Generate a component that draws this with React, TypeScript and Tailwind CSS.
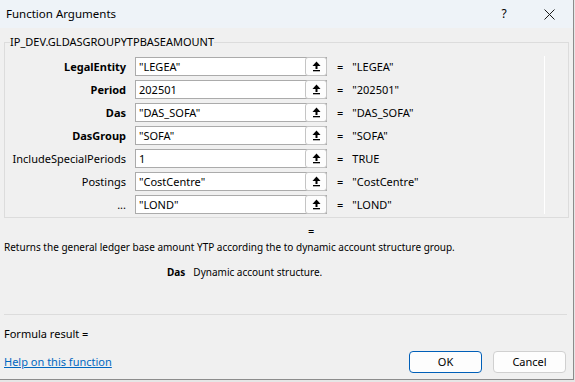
import React from "react";

type Row = { label: string; bold: boolean; input: string; value: string };

const rows: Row[] = [
  { label: "LegalEntity", bold: true, input: '"LEGEA"', value: '"LEGEA"' },
  { label: "Period", bold: true, input: "202501", value: '"202501"' },
  { label: "Das", bold: true, input: '"DAS_SOFA"', value: '"DAS_SOFA"' },
  { label: "DasGroup", bold: true, input: '"SOFA"', value: '"SOFA"' },
  { label: "IncludeSpecialPeriods", bold: false, input: "1", value: "TRUE" },
  { label: "Postings", bold: false, input: '"CostCentre"', value: '"CostCentre"' },
  { label: "...", bold: false, input: '"LOND"', value: '"LOND"' },
];

function UpArrow() {
  return (
    <svg width="9" height="11" viewBox="0 0 9 11">
      <polygon points="4.5,0.5 0.5,5 8.5,5" fill="#000" />
      <rect x="3.5" y="4.5" width="2" height="3.5" fill="#000" />
      <rect x="1" y="9" width="7" height="1.3" fill="#000" />
    </svg>
  );
}

export default function App() {
  return (
    <div className="w-[575px] h-[382px] bg-[#e6e6e6] font-['Noto_Sans',sans-serif] text-[11px] leading-[16px] text-black">
      <div className="w-[574px] h-[380px] bg-[#f0f0f0] border-r border-b border-[#8c8c8c] flex flex-col">
        {/* Title bar */}
        <div className="h-[28px] bg-[#eef3f8] flex items-center shrink-0">
          <span className="pl-[6px] text-[11.5px]">Function Arguments</span>
          <span className="ml-auto w-[12px] text-center text-[12px] mr-[34px]">?</span>
          <svg width="11" height="11" viewBox="0 0 11 11" className="mr-[18px]">
            <path d="M0.5 0.5 L10.5 10.5 M10.5 0.5 L0.5 10.5" stroke="#1a1a1a" strokeWidth="1" />
          </svg>
        </div>

        <div className="px-[4px] flex flex-col">
          <fieldset className="border border-[#dcdcdc] mt-[6px] pb-[3px]">
            <legend className="ml-[5px] leading-[16px]">IP_DEV.GLDASGROUPYTPBASEAMOUNT</legend>
            <div className="flex pt-[7px]">
              <div className="flex-1 flex flex-col gap-[4px]">
                {rows.map((r) => (
                  <div key={r.label} className="flex items-center h-[19px]">
                    <div className={`w-[121px] text-right ${r.bold ? "font-bold" : ""}`}>{r.label}</div>
                    <div className="ml-[9px] w-[192px] h-[19px] bg-white border border-[#ababab] flex items-center">
                      <span className="flex-1 pl-[3px] whitespace-nowrap overflow-hidden">{r.input}</span>
                      <div className="w-[22px] h-[19px] -my-px -mr-px border border-[#c4c4c4] rounded-[3px] bg-[#fdfdfd] flex items-center justify-center">
                        <UpArrow />
                      </div>
                    </div>
                    <span className="ml-[10px]">=</span>
                    <span className="ml-[9px] whitespace-nowrap">{r.value}</span>
                  </div>
                ))}
              </div>
              <div className="w-px bg-white self-stretch -mt-px" />
              <div className="w-[23px]" />
            </div>
          </fieldset>

          <div className="mt-[5px] pl-[304px]">=</div>
          <div className="text-[10px]">Returns the general ledger base amount YTP according the to dynamic account structure group.</div>
          <div className="mt-[9px] flex text-[10px]">
            <span className="pl-[163px] font-bold">Das</span>
            <span className="ml-[8px]">Dynamic account structure.</span>
          </div>

          <div className="mt-[34px] border-t border-[#dcdcdc] w-[563px]" />
          <div className="mt-[11px]">Formula result =</div>

          <div className="mt-[9px] flex items-center">
            <a className="text-[#0067c0] underline cursor-pointer">Help on this function</a>
            <button className="ml-auto w-[73px] h-[22px] border border-[#005fb8] rounded-[4px] bg-[#fdfdfd] text-[11px]">OK</button>
            <button className="ml-[11px] mr-[3px] w-[73px] h-[22px] border border-[#d0d0d0] rounded-[4px] bg-[#fdfdfd] text-[11px]">Cancel</button>
          </div>
        </div>
      </div>
    </div>
  );
}
